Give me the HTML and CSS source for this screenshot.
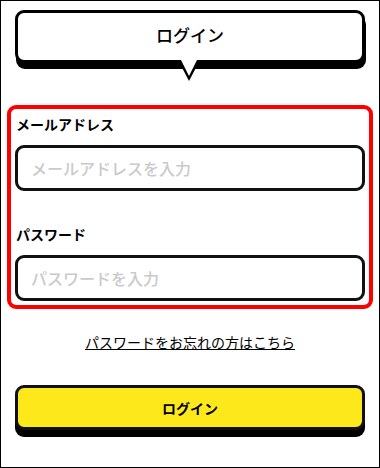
FILE: index.html
```html
<!DOCTYPE html>
<html lang="ja">
<head>
    <meta charset="UTF-8">
    <meta name="viewport" content="width=device-width, initial-scale=1.0">
    <title>ログイン</title>
    <link rel="stylesheet" href="styles.css">
</head>
<body>
    <div class="page">
        <div class="bubble">
            <h1>ログイン</h1>
        </div>

        <form class="login-form">
            <label for="email">メールアドレス</label>
            <input type="email" id="email" placeholder="メールアドレスを入力">

            <label for="password" class="second">パスワード</label>
            <input type="password" id="password" placeholder="パスワードを入力">
        </form>

        <a href="#" class="forgot">パスワードをお忘れの方はこちら</a>

        <button class="login-btn">ログイン</button>
    </div>
</body>
</html>
```

FILE: styles.css
```css
body {
    margin: 0;
    padding: 0;
    font-family: "Noto Sans CJK JP", "Noto Sans", sans-serif;
    color: #000;
    background-color: #fff;
}

.page {
    box-sizing: border-box;
    width: 380px;
    height: 468px;
    border: 1px solid #000;
    display: flex;
    flex-direction: column;
}

.bubble {
    position: relative;
    box-sizing: border-box;
    margin: 9px 14px 0 14px;
    height: 53px;
    padding-bottom: 4px;
    border: 3px solid #000;
    border-radius: 9px;
    background-color: #fff;
    box-shadow: 1px 6px 0 #000;
    display: flex;
    align-items: center;
    justify-content: center;
}

/* the little tail under the bubble */
.bubble::before,
.bubble::after {
    content: "";
    position: absolute;
    top: 100%;
    left: 50%;
    width: 0;
    height: 0;
    border-style: solid;
    border-color: transparent;
}

.bubble::before {
    margin-left: -12px;
    border-width: 21px 11px 0 11px;
    border-top-color: #000;
}

.bubble::after {
    margin-left: -9px;
    border-width: 16px 8px 0 8px;
    border-top-color: #fff;
}

h1 {
    margin: 0;
    font-size: 17px;
    font-weight: 500;
    line-height: 24px;
}

.login-form {
    margin: 42px 0 0 6px;
    width: 366px;
    box-sizing: border-box;
    border: 4px solid #f00;
    border-radius: 9px;
    padding: 5px 4px 4px 4px;
    display: flex;
    flex-direction: column;
}

.login-form label {
    font-size: 14px;
    font-weight: bold;
    line-height: 20px;
    padding-left: 1px;
}

.login-form label.second {
    margin-top: 33px;
}

.login-form input {
    box-sizing: border-box;
    height: 46px;
    margin-top: 11px;
    border: 3px solid #111;
    border-radius: 9px;
    padding: 0 13px;
    font-family: inherit;
    font-size: 16px;
    font-weight: 500;
    outline: none;
}

.login-form input::placeholder {
    color: #cacaca;
}

.forgot {
    margin-top: 23px;
    align-self: center;
    font-size: 14px;
    line-height: 20px;
    color: #000;
}

.login-btn {
    box-sizing: border-box;
    margin: 33px 14px 0 14px;
    height: 45px;
    border: 3px solid #111;
    border-radius: 9px;
    background-color: #fde81c;
    box-shadow: 0 7px 0 #000;
    font-family: inherit;
    font-size: 14px;
    font-weight: bold;
    color: #000;
    cursor: pointer;
}
```
